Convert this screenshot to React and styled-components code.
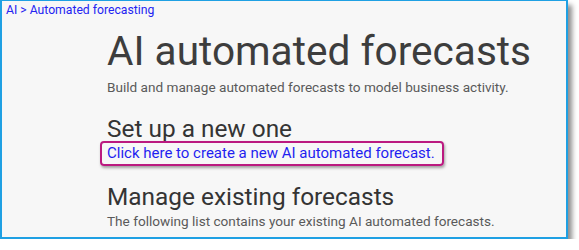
import React from 'react';
import styled, { createGlobalStyle } from 'styled-components';

const GlobalStyle = createGlobalStyle`
	html, body {
		margin: 0;
		padding: 0;
		background: #ffffff;
	}
	body {
		font-family: Roboto, 'Liberation Sans', Arial, sans-serif;
	}
`;

const Frame = styled.div`
	box-sizing: border-box;
	width: 568px;
	height: 239px;
	background: #f7f7f7;
	border-style: solid;
	border-color: #1fa0e3;
	border-width: 1px 2px 2px 2px;
	box-shadow: 4px 5px 5px rgba(0, 0, 0, 0.45);
	padding-top: 1px;
	overflow: hidden;
`;

const Breadcrumb = styled.div`
	padding-left: 4px;
	font-size: 12.2px;
	line-height: 16px;
	color: #2424f2;
	white-space: nowrap;
`;

const Content = styled.div`
	padding-left: 105px;
	display: flex;
	flex-direction: column;
	align-items: flex-start;
`;

const Title = styled.h1`
	margin: 9px 0 0;
	font-size: 40.6px;
	line-height: 48px;
	font-weight: 400;
	color: #3d3d3d;
	white-space: nowrap;
`;

const Heading = styled.h2`
	margin: ${(p) => p.$top}px 0 0;
	font-size: 24.4px;
	line-height: ${(p) => p.$lh}px;
	font-weight: 400;
	color: #343434;
	white-space: nowrap;
`;

const Note = styled.p`
	margin: ${(p) => p.$top}px 0 0;
	font-size: 13.6px;
	line-height: 18px;
	color: #5a5a5a;
	white-space: nowrap;
`;

const Callout = styled.div`
	margin: -1px 0 0 -7.5px;
	padding: 1px 7px 1px 5.5px;
	border: 2px solid #bb1a80;
	border-radius: 4px;
	box-shadow: 1px 2px 3px rgba(0, 0, 0, 0.35);
`;

const CreateLink = styled.a`
	display: block;
	font-size: 15px;
	line-height: 19px;
	color: #1f1ff0;
	text-decoration: none;
	white-space: nowrap;
	cursor: pointer;
`;

const App = () => {
	return (
		<>
			<GlobalStyle />
			<Frame>
				<Breadcrumb>AI &gt; Automated forecasting</Breadcrumb>
				<Content>
					<Title>AI automated forecasts</Title>
					<Note $top={3}>Build and manage automated forecasts to model business activity.</Note>
					<Heading $top={20} $lh={26}>
						Set up a new one
					</Heading>
					<Callout>
						<CreateLink>Click here to create a new AI automated forecast.</CreateLink>
					</Callout>
					<Heading $top={16} $lh={30}>
						Manage existing forecasts
					</Heading>
					<Note $top={0}>The following list contains your existing AI automated forecasts.</Note>
				</Content>
			</Frame>
		</>
	);
};

export default App;
